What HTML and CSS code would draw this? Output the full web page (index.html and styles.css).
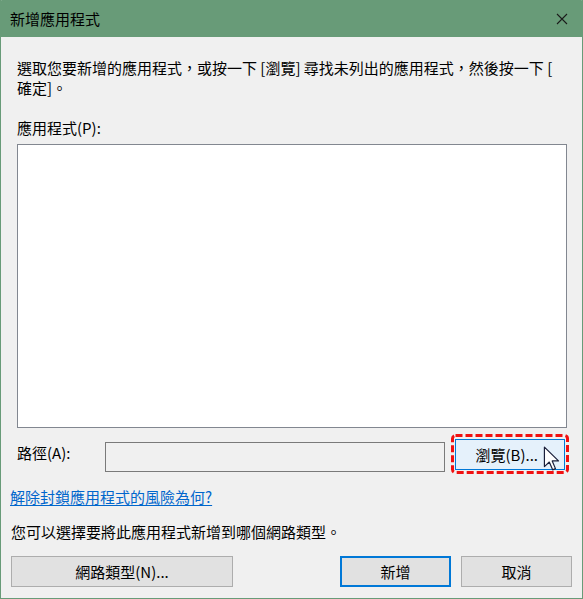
FILE: index.html
```html
<!DOCTYPE html>
<html lang="zh-Hant">
<head>
<meta charset="utf-8">
<title>新增應用程式</title>
<link rel="stylesheet" href="styles.css">
</head>
<body>
<div class="window">
  <div class="titlebar">
    <span class="title">新增應用程式</span>
    <svg class="close" width="12" height="12" viewBox="0 0 12 12"><path d="M1 1 L11 11 M11 1 L1 11" stroke="#1b1b1b" stroke-width="1.1" fill="none"/></svg>
  </div>
  <div class="body">
    <p class="intro">選取您要新增的應用程式，或按一下 [瀏覽] 尋找未列出的應用程式，然後按一下 [<br>確定]。</p>
    <div class="label">應用程式(P):</div>
    <div class="listbox"></div>
    <div class="pathrow">
      <span class="pathlabel">路徑(A):</span>
      <div class="pathinput"></div>
      <div class="browse-wrap">
        <button class="btn browse">瀏覽(B)...</button>
        <svg class="focus-ring" width="118" height="40" viewBox="0 0 118 40"><rect x="1.5" y="1.5" width="115" height="37" rx="3" ry="3" fill="none" stroke="#f01010" stroke-width="3" stroke-dasharray="7 3"/></svg>
        <svg class="cursor" width="18" height="26" viewBox="0 0 16 24"><path d="M1 1 L1 19 L5.5 14.8 L8.6 22 L11.2 20.9 L8.2 13.8 L14 13.8 Z" fill="#ffffff" stroke="#1a1f3a" stroke-width="1.1" stroke-linejoin="round"/></svg>
      </div>
    </div>
    <a class="link" href="#">解除封鎖應用程式的風險為何?</a>
    <p class="note">您可以選擇要將此應用程式新增到哪個網路類型。</p>
    <div class="buttons">
      <button class="btn nettype">網路類型(N)...</button>
      <button class="btn primary">新增</button>
      <button class="btn cancel">取消</button>
    </div>
  </div>
</div>
</body>
</html>
```

FILE: styles.css
```css
* { box-sizing: border-box; }
html, body {
  margin: 0;
  padding: 0;
  background: #f0f0f0;
}
body {
  font-family: "Noto Sans CJK TC", "Noto Sans", sans-serif;
  font-size: 15px;
  color: #000;
}
.window {
  width: 583px;
  height: 599px;
  border: 1px solid #689b78;
  border-top: none;
  background: #f0f0f0;
  display: flex;
  flex-direction: column;
}
.titlebar {
  height: 37px;
  margin: 0 -1px;
  background: #689b78;
  display: flex;
  align-items: center;
  justify-content: space-between;
  padding: 0 15px 0 10px;
  border-radius: 2px 2px 0 0;
}
.title {
  font-size: 15px;
  line-height: 20px;
  color: #000;
}
.close { display: block; }
.body {
  flex: 1;
  display: flex;
  flex-direction: column;
  padding: 0 10px 0 9px;
}
.intro {
  margin: 21px 0 0 7px;
  line-height: 20px;
  white-space: nowrap;
}
.label {
  margin: 20px 0 0 7px;
  line-height: 20px;
}
.listbox {
  margin: 6px 0 0 7px;
  width: 550px;
  height: 284px;
  background: #fff;
  border: 1px solid #828790;
}
.pathrow {
  margin: 11px 0 0 7px;
  display: flex;
  align-items: flex-start;
  height: 31px;
}
.pathlabel {
  width: 88px;
  line-height: 20px;
  margin-top: 4px;
}
.pathinput {
  width: 340px;
  height: 30px;
  margin-top: 3px;
  border: 1px solid #7a7a7a;
  background: #f0f0f0;
}
.browse-wrap {
  position: relative;
  margin-left: 10px;
}
.btn {
  font-family: "Noto Sans CJK TC", "Noto Sans", sans-serif;
  font-size: 15px;
  color: #000;
  height: 31px;
  padding: 0;
  background: #e1e1e1;
  border: 1px solid #adadad;
  line-height: 20px;
  display: flex;
  align-items: center;
  justify-content: center;
}
.browse {
  width: 110px;
  background: #e5f1fb;
  border-color: #0078d7;
  justify-content: flex-end;
  padding-right: 26px;
}
.focus-ring {
  position: absolute;
  left: -4px;
  top: -5px;
}
.cursor {
  position: absolute;
  left: 88px;
  top: 7px;
}
.link {
  margin: 17px 0 0 0;
  line-height: 20px;
  color: #0066cc;
  text-decoration: underline;
  text-underline-offset: 2px;
  align-self: flex-start;
}
.note {
  margin: 15px 0 0 1px;
  line-height: 20px;
}
.buttons {
  margin: 14px 0 0 1px;
  display: flex;
  gap: 10px;
}
.nettype {
  width: 222px;
  margin-right: auto;
}
.primary {
  width: 111px;
  border: 2px solid #0078d7;
}
.cancel {
  width: 111px;
}
```
